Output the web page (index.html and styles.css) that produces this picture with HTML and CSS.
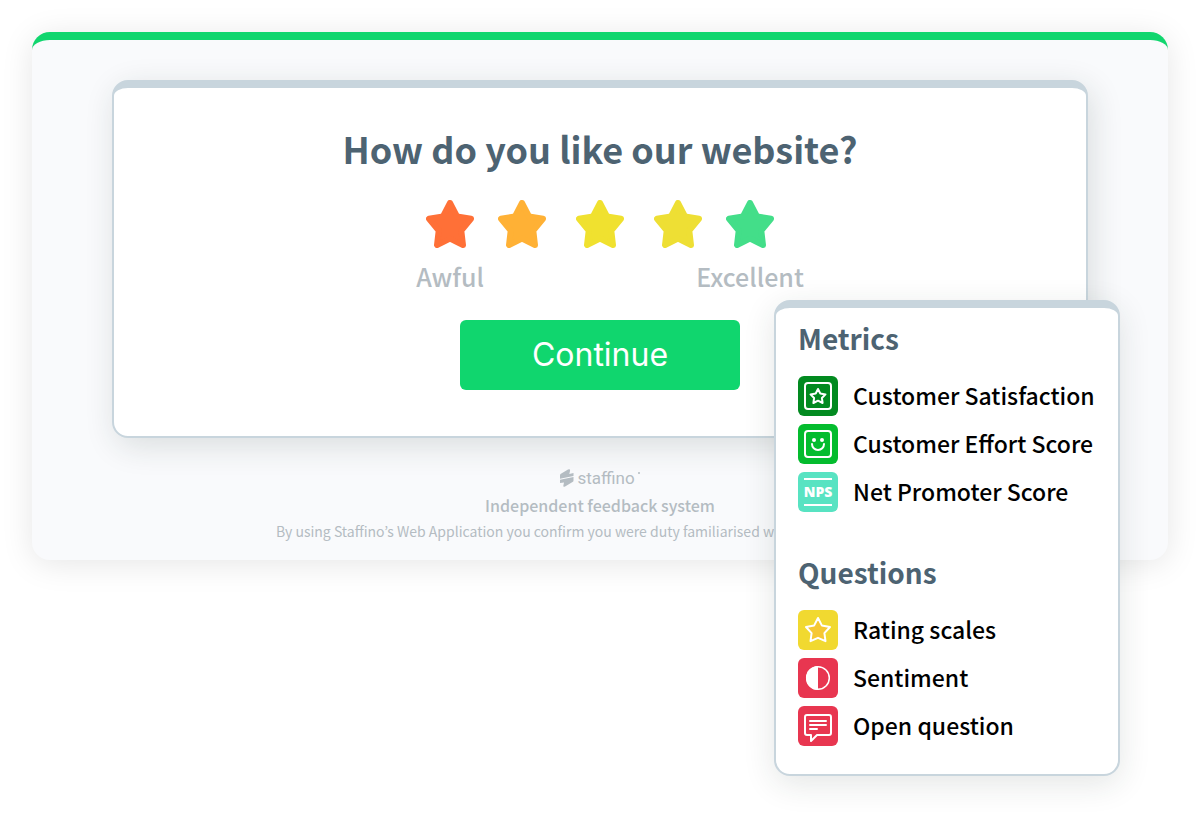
FILE: index.html
```html
<!DOCTYPE html>
<html lang="en">
<head>
<meta charset="utf-8">
<title>Staffino feedback</title>
<link rel="stylesheet" href="styles.css">
</head>
<body>
<svg class="defs" aria-hidden="true">
  <symbol id="star" viewBox="0 0 48 48"><path d="M24 3 L31 16.500 L45 18.800 L35.300 30.500 L37 45 L24 38.600 L11 45 L12.700 30.500 L3 18.800 L17 16.500 Z" fill="currentColor" stroke="currentColor" stroke-width="6" stroke-linejoin="round"/></symbol>
</svg>
<main class="page">
  <section class="panel">
    <form class="card">
      <h1 class="title">How do you like our website?</h1>
      <div class="stars" role="radiogroup" aria-label="Rating">
        <label class="rate red"><input type="radio" name="rating"><svg class="star"><use href="#star"/></svg><span>Awful</span></label>
        <label class="rate orange"><input type="radio" name="rating" aria-label="2"><svg class="star"><use href="#star"/></svg></label>
        <label class="rate yellow"><input type="radio" name="rating" aria-label="3"><svg class="star"><use href="#star"/></svg></label>
        <label class="rate lime"><input type="radio" name="rating" aria-label="4"><svg class="star"><use href="#star"/></svg></label>
        <label class="rate green"><input type="radio" name="rating"><svg class="star"><use href="#star"/></svg><span>Excellent</span></label>
      </div>
      <button class="continue" type="button">Continue</button>
    </form>
    <footer class="foot">
      <div class="brand">
        <svg class="mark" viewBox="0 0 14 18"><path d="M0.500 5 L8 0.500 Q10.500 -0.500 10 2 L9.300 5 L13.500 4 V7 L0 9.700 V6.500 Q0 5.500 0.500 5Z M0 10.700 L13.500 8 V11.500 Q13.500 12.500 12.500 13 L5.500 17.200 Q2.800 18.600 3.400 16.400 L4 13.500 L0 14Z" fill="currentColor"/></svg>
        <span>staffino</span><i class="dot"></i>
      </div>
      <p class="system">Independent feedback system</p>
      <p class="legal">By using Staffino’s Web Application you confirm you were duty familiarised with</p>
    </footer>
    <aside class="menu">
      <h2>Metrics</h2>
      <ul>
        <li><svg class="icon" viewBox="0 0 40 40"><rect width="40" height="40" rx="6" fill="#028a20"/><g fill="none" stroke="#fff" stroke-width="2" stroke-linejoin="round"><rect x="7" y="7" width="26" height="26" rx="3"/><path d="M20 13 L22.300 17.500 L27.500 18.400 L23.900 22 L24.600 27 L20 24.700 L15.400 27 L16.100 22 L12.500 18.400 L17.700 17.500Z"/></g></svg><span>Customer Satisfaction</span></li>
        <li><svg class="icon" viewBox="0 0 40 40"><rect width="40" height="40" rx="6" fill="#04bc2e"/><g fill="none" stroke="#fff" stroke-width="2" stroke-linecap="round"><rect x="7" y="7" width="26" height="26" rx="3"/><path d="M14 20 a6 6 0 0 0 12 0"/></g><circle cx="16" cy="16" r="2" fill="#fff"/><circle cx="24" cy="16" r="2" fill="#fff"/></svg><span>Customer Effort Score</span></li>
        <li><b class="icon nps">NPS</b><span>Net Promoter Score</span></li>
      </ul>
      <h2>Questions</h2>
      <ul>
        <li><svg class="icon" viewBox="0 0 40 40"><rect width="40" height="40" rx="6" fill="#f1d930"/><path d="M20 8 L23.800 15.400 L32 17 L26.400 23.100 L27.500 31.200 L20 27.800 L12.500 31.200 L13.600 23.100 L8 17 L16.200 15.400Z" fill="#f6c832" stroke="#fff" stroke-width="2" stroke-linejoin="round"/></svg><span>Rating scales</span></li>
        <li><svg class="icon" viewBox="0 0 40 40"><rect width="40" height="40" rx="6" fill="#e83650"/><circle cx="20" cy="20" r="11.300" fill="none" stroke="#fff" stroke-width="1.500"/><path d="M20 8 a12 12 0 0 0 0 24Z" fill="#fff"/></svg><span>Sentiment</span></li>
        <li><svg class="icon" viewBox="0 0 40 40"><rect width="40" height="40" rx="6" fill="#e83650"/><path d="M9 9 H31 Q33 9 33 11 V27 Q33 29 31 29 H19 L13 35 V29 H9 Q7 29 7 27 V11 Q7 9 9 9Z" fill="none" stroke="#fff" stroke-width="2" stroke-linejoin="round"/><path d="M12 15 H28 M12 19 H28 M12 23 H19" stroke="#fff" stroke-width="2" stroke-linecap="round"/></svg><span>Open question</span></li>
      </ul>
    </aside>
  </section>
</main>
</body>
</html>
```
FILE: styles.css
```css
* { box-sizing: border-box; }
body {
  margin: 0;
  background: #fff;
  font-family: "Noto Sans CJK KR", "Noto Sans", sans-serif;
}
h1, h2, p, ul { margin: 0; padding: 0; }
.defs { display: none; }
.page {
  min-height: 100vh;
  padding: 32px;
}
.panel {
  position: relative;
  padding: 40px 80px 18px;
  border-top: 8px solid #10d66e;
  border-radius: 18px;
  background: #f9fafc;
  box-shadow: 0 4px 32px rgba(0, 0, 0, 0.1);
}
.card {
  display: flex;
  flex-direction: column;
  align-items: center;
  padding: 32px 24px 46px;
  border: 2px solid #c8d5dd;
  border-top-width: 8px;
  border-radius: 16px;
  background: #fff;
  box-shadow: 4px 8px 32px rgba(30, 50, 40, 0.14);
}
.title {
  font-size: 36px;
  line-height: 56px;
  font-weight: 700;
  color: #4d6372;
}
.stars {
  display: flex;
  gap: 24px;
  height: 92px;
  margin-top: 24px;
}
.rate {
  display: flex;
  flex-direction: column;
  align-items: center;
  gap: 12px;
  width: 48px;
  white-space: nowrap;
}
.rate input {
  position: absolute;
  opacity: 0;
}
.rate span {
  font-size: 25px;
  line-height: 32px;
  font-weight: 500;
  color: #b4bcc2;
}
.star { width: 48px; height: 48px; flex: none; }
.red { color: #ff7037; }
.orange { color: #ffb135; }
.yellow { color: #f0e12f; margin: 0 6px; }
.lime { color: #eedf34; }
.green { color: #43de89; }
.continue {
  width: 280px;
  height: 70px;
  margin-top: 28px;
  border: 0;
  border-radius: 6px;
  background: #10d66e;
  color: #fff;
  font: 400 32px/40px Inter, sans-serif;
  font-optical-sizing: none;
}
.foot {
  display: flex;
  flex-direction: column;
  align-items: center;
  padding-top: 30px;
  color: #b4bcc2;
}
.brand {
  display: flex;
  align-items: center;
  gap: 3px;
  height: 20px;
  font: 400 17px/20px Roboto, sans-serif;
}
.mark { width: 14px; height: 18px; }
.dot {
  width: 2px;
  height: 2px;
  margin-bottom: 10px;
  border-radius: 1px;
  background: currentColor;
}
.system {
  margin-top: 5px;
  font-size: 16px;
  line-height: 24px;
  font-weight: 500;
}
.legal {
  align-self: flex-start;
  margin: 3px 0 0 164px;
  font-size: 14px;
  line-height: 22px;
  white-space: nowrap;
}
.menu {
  position: absolute;
  top: 260px;
  right: 48px;
  width: 346px;
  padding: 10px 12px 28px 22px;
  border: 2px solid #c8d5dd;
  border-top-width: 8px;
  border-radius: 16px;
  background: #fff;
  box-shadow: 0 8px 32px rgba(30, 50, 40, 0.12);
}
.menu h2 {
  font-size: 28px;
  line-height: 40px;
  font-weight: 700;
  color: #4d6372;
}
.menu ul {
  display: flex;
  flex-direction: column;
  gap: 8px;
  margin-top: 18px;
  list-style: none;
}
.menu ul + h2 { margin-top: 40px; }
.menu li {
  display: flex;
  align-items: flex-start;
  gap: 15px;
  font-size: 23px;
  line-height: 38px;
  font-weight: 500;
  color: #000;
  white-space: nowrap;
}
.icon { width: 40px; height: 40px; flex: none; }
.nps {
  padding: 6px;
  border-radius: 6px;
  background:
    linear-gradient(#fff, #fff) 6px 6px / 28px 2px no-repeat,
    linear-gradient(#fff, #fff) 6px 32px / 28px 2px no-repeat,
    #58e3c2;
  color: #fff;
  font: 800 14px/28px "Open Sans", sans-serif;
  display: flex;
  justify-content: center;
}
```
